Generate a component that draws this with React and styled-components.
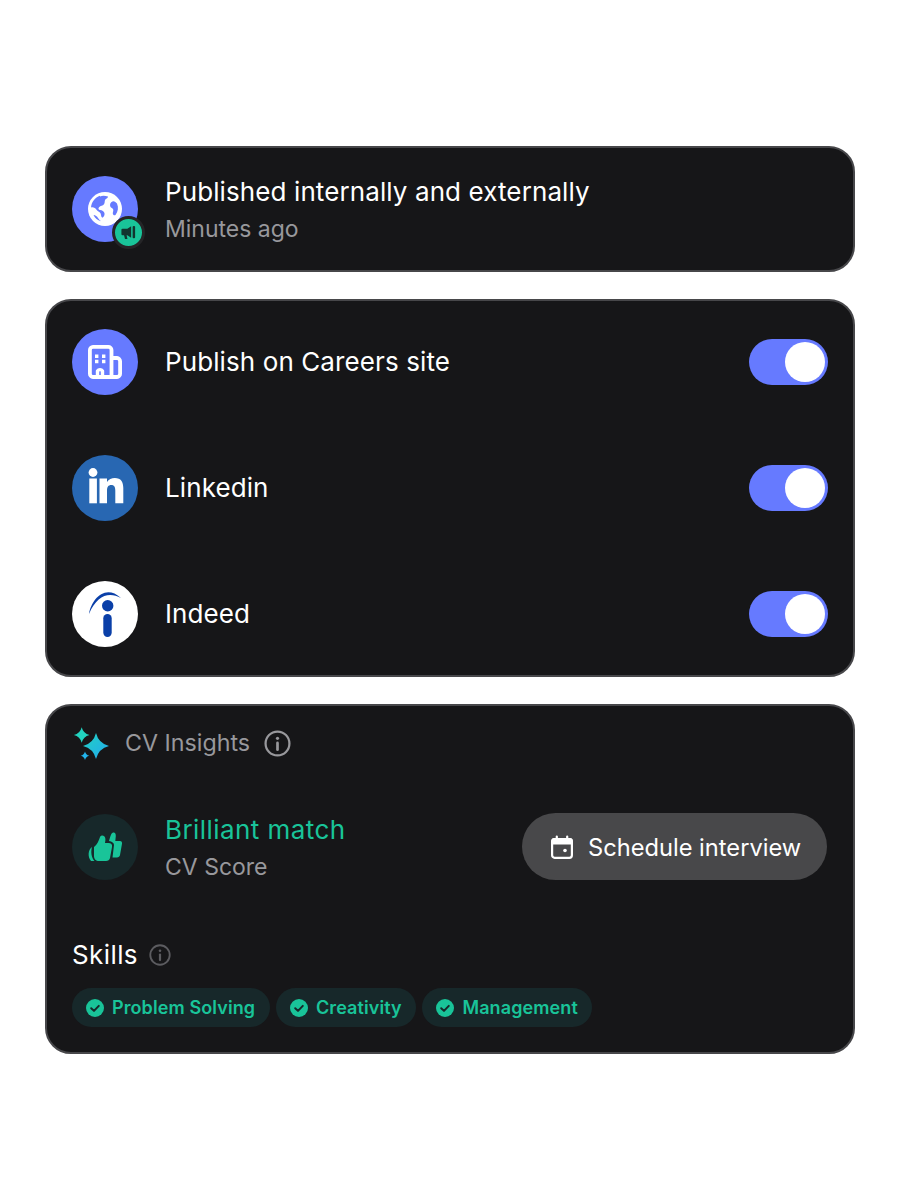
import styled, { createGlobalStyle } from 'styled-components'

const GlobalStyle = createGlobalStyle`
  html, body {
    margin: 0;
    background: #fff;
    font-family: Inter, "Liberation Sans", sans-serif;
  }
`

const green = '#19c499'

const Page = styled.div`
  box-sizing: border-box;
  width: 900px;
  height: 1200px;
  padding: 146px 45px 0;
  display: flex;
  flex-direction: column;
  gap: 27px;
`

const Card = styled.section`
  box-sizing: border-box;
  background: #161618;
  border: 2px solid #47474a;
  border-radius: 26px;
  padding: ${props => props.$padding || '28px 25px'};
  display: flex;
  flex-direction: column;
  gap: ${props => props.$gap || '0'};
`

const Row = styled.div`
  height: 66px;
  display: flex;
  align-items: center;
  gap: 27px;
`

const Avatar = styled.div`
  position: relative;
  flex: none;
  width: 66px;
  height: 66px;
  border-radius: 50%;
  display: flex;
  align-items: center;
  justify-content: center;
  background: ${props => props.$bg};
`

const Badge = styled.div`
  position: absolute;
  right: -6.5px;
  bottom: -6.5px;
  width: 27px;
  height: 27px;
  border: 3px solid #252527;
  border-radius: 50%;
  background: ${green};
  display: flex;
  align-items: center;
  justify-content: center;
`

const TextBlock = styled.div`
  margin-top: 2px;
  display: flex;
  flex-direction: column;
  gap: 7px;
`

const Title = styled.div`
  font-size: 26px;
  line-height: 31px;
  letter-spacing: 0.1px;
  color: #fff;
`

const ChannelName = styled(Title)`
  margin-top: -2px;
`

const MatchTitle = styled(Title)`
  letter-spacing: 0.43px;
  color: ${green};
`

const Sub = styled.div`
  font-size: 23px;
  line-height: 31px;
  color: #98989c;
`

const Toggle = styled.div`
  box-sizing: border-box;
  margin-left: auto;
  width: 79.5px;
  height: 46.5px;
  border-radius: 24px;
  background: #667aff;
  padding: 3.25px;
  display: flex;
  justify-content: flex-end;
  &::after {
    content: '';
    width: 40px;
    height: 40px;
    border-radius: 50%;
    background: #fff;
  }
`

const InsightHead = styled.div`
  display: flex;
  align-items: center;
  height: 36px;
  margin-left: 1px;
  color: #98989c;
  font-size: 23.25px;
`

const HeadLabel = styled.span`
  margin: -2px 14px 0;
`

const MatchRow = styled.div`
  height: 66px;
  margin-top: 53px;
  display: flex;
  align-items: center;
  justify-content: space-between;
`

const ScheduleButton = styled.button`
  box-sizing: border-box;
  width: 305.5px;
  height: 67px;
  margin-top: -1px;
  margin-right: 1px;
  border: 0;
  border-radius: 34px;
  background: #48484a;
  color: #fff;
  font: 400 23.66px Inter, "Liberation Sans", sans-serif;
  display: flex;
  align-items: center;
  gap: 13px;
  padding: 0 0 0 27.5px;
`

const ButtonLabel = styled.span`
  margin-top: 2px;
`

const SkillsHead = styled.div`
  margin-top: 59px;
  display: flex;
  align-items: center;
  gap: 11px;
  color: #fff;
  font-size: 26px;
  line-height: 32px;
  letter-spacing: 0.4px;
`

const Chips = styled.div`
  display: flex;
  gap: 6.2px;
  margin-top: 17px;
`

const Chip = styled.div`
  height: 39px;
  padding: 0 14.5px 0 14px;
  border-radius: 20px;
  background: #17282a;
  color: ${green};
  font-size: 18px;
  font-weight: 600;
  letter-spacing: 0.1px;
  display: flex;
  align-items: center;
  gap: 8px;
`

const Info = ({ size, color }) => (
  <svg width={size} height={size} viewBox="0 0 24 24" fill="none" stroke={color} strokeWidth="2" strokeLinecap="round">
    <circle cx="12" cy="12" r="10.6" />
    <path d="M12 11.5v6" strokeWidth="2.4" />
    <circle cx="12" cy="7.4" r="1.4" fill={color} stroke="none" />
  </svg>
)

const Check = () => (
  <svg width="18" height="18" viewBox="0 0 18 18">
    <circle cx="9" cy="9" r="9" fill={green} />
    <path d="M5.2 9.2 8 11.9l4.8-5" fill="none" stroke="#17282a" strokeWidth="2" strokeLinecap="round" strokeLinejoin="round" />
  </svg>
)

const Globe = () => (
  <svg width="34" height="34" viewBox="0 0 34 34">
    <circle cx="17" cy="17" r="17" fill="#fff" />
    <path d="M12 3.800C7 5.500 3.500 10 3 15.500c2.200-.6 4.500 .4 5.500 2.200 1 1.600 3 1.800 4 3.500 .8 1.500 .2 3 1.800 4.500 1.500-.8 2.500-2.500 2.200-4.500-.3-2-2.500-3-4.500-3.200-1.500-.2-2-1.500-1-2.800 1.500-1.800 3.800-1.200 5-3 1.200-1.800 .2-3.500 1.500-5 .8-1 2.500-1.200 2.500-2.800-2.800-.8-5.500-1.200-8 0Z" fill="#667aff" />
    <path d="M24.500 9.500c-2 .8-3 3-2.200 5 .6 1.500 2.700 1.500 3 3.200 .2 1.500-.8 2.800-.4 4.300 .4 1.200 1.600 1.600 2.600 1 2.600-3.500 3.200-7.500 1.500-11.500-1.200-1.200-2.800-2.600-4.500-2Z" fill="#667aff" />
    <path d="M5.500 23c2 .3 3.500 1.300 4.500 3 .8 1.400 1.800 2.500 3 3.200-3.400-.8-6-3-7.500-6.200Z" fill="#667aff" />
  </svg>
)

const Megaphone = () => (
  <svg width="17" height="17" viewBox="0 0 18 18" fill="#12352f">
    <path d="M1.500 6.200A1.200 1.200 0 0 1 2.700 5h5.100l4-2.600v12.200l-4-2.600H7l.9 4H5.300l-1-4H2.700a1.200 1.200 0 0 1-1.200-1.200z" />
    <rect x="13.400" y="2" width="2.600" height="13" rx="1.100" />
  </svg>
)

const Building = () => (
  <svg width="34" height="34" viewBox="0 0 34 34" fill="none" stroke="#fff" strokeWidth="3.800" strokeLinejoin="round">
    <path d="M23.500 32H5A3.200 3.200 0 0 1 1.900 28.800V5A3.200 3.200 0 0 1 5 1.900h15.300A3.200 3.200 0 0 1 23.500 5V32Z" />
    <path d="M23.500 13H29A3.200 3.200 0 0 1 32.100 16.200V28.800A3.200 3.200 0 0 1 29 32H23.500" />
    <path d="M9.500 32v-6a3 3 0 0 1 5 0v6" strokeWidth="3.400" />
    <path d="M7 11.200h3.400M14 11.200h3.400M7 16.500h3.400M14 16.500h3.400" strokeWidth="3.400" />
  </svg>
)

const Linkedin = () => (
  <svg width="66" height="66" viewBox="0 0 66 66" fill="#fff">
    <circle cx="21" cy="17.500" r="4.400" />
    <rect x="17.300" y="23.500" width="7.600" height="24.800" />
    <path d="M27.500 23.500h7.500v3.400c1.700-2.500 4.600-4 7.800-4 6.300 0 8.500 4 8.500 10.200V48.300h-8V35.500c0-3.300-1-5.500-4-5.500-3.100 0-4.300 2.100-4.300 5.700V48.300h-7.500Z" />
  </svg>
)

const Indeed = () => (
  <svg width="66" height="66" viewBox="0 0 66 66" fill="#0a3fa8">
    <path d="M17 33C19 19 33 2 49 17 37 10.500 25 14 17 33Z" />
    <circle cx="35.700" cy="24.700" r="5.700" />
    <rect x="31.300" y="33" width="8.400" height="23" rx="4.200" />
  </svg>
)

// four point star with concave sides
const star = (cx, cy, r) => {
  const k = r * 0.2
  return `M${cx} ${cy - r}Q${cx + k} ${cy - k} ${cx + r} ${cy}Q${cx + k} ${cy + k} ${cx} ${cy + r}Q${cx - k} ${cy + k} ${cx - r} ${cy}Q${cx - k} ${cy - k} ${cx} ${cy - r}Z`
}

const Sparkles = () => (
  <svg width="38" height="36" viewBox="0 0 38 36">
    <defs>
      <linearGradient id="spark" x1="0" y1="0" x2="1" y2="1">
        <stop offset="0" stopColor="#22d3c0" />
        <stop offset="1" stopColor="#22a8f0" />
      </linearGradient>
    </defs>
    <path d={star(23, 21, 13)} fill="url(#spark)" />
    <path d={star(8.700, 10, 7.800)} fill="#22d3c0" />
    <path d={star(12, 30.700, 4.300)} fill="#22b4ec" />
  </svg>
)

const Thumbs = () => (
  <svg width="36" height="30" viewBox="-1 0 36 30" fill={green}>
    <path d="M21 9C22 6 23 1 25 .5 27 0 28 2 27.800 4L27.300 9H32C33.500 9 34.300 10.300 34 11.800L32 23C31.800 24.500 30.500 25.500 29 25.500H24.500L26 13C26 11 24 9.500 21 9Z" />
    <path d="M6 15C9 13 11 8 12 5 13 3 15 3 16.500 4.500 17.800 6 17.500 8 17 11H20.500C23 11 24.500 12.500 24 15L22 26C21.600 28 20 29 18 29H11C8 29 6 27 6 24Z" />
    <path d="M4 15C0 17.500-.5 25 3 29H6.500C3.500 26 2.500 20 4 15Z" />
  </svg>
)

const Calendar = () => (
  <svg width="26" height="26" viewBox="0 0 26 26" fill="none" stroke="#fff">
    <rect x="3.100" y="5" width="19.800" height="18.800" rx="2.500" strokeWidth="2.200" />
    <path d="M3.200 9.500h19.600V7a2 2 0 0 0-2-2H5.200a2 2 0 0 0-2 2Z" fill="#fff" strokeWidth="2" />
    <path d="M7.800 2.500v3M18.200 2.500v3" strokeWidth="2.200" strokeLinecap="round" />
    <circle cx="16" cy="16.500" r="1.800" fill="#fff" stroke="none" />
  </svg>
)

const channels = [
  { name: 'Publish on Careers site', bg: '#667aff', icon: <Building /> },
  { name: 'Linkedin', bg: '#2867b2', icon: <Linkedin /> },
  { name: 'Indeed', bg: '#fff', icon: <Indeed /> },
]

const skills = ['Problem Solving', 'Creativity', 'Management']

export default function App() {
  return (
    <Page>
      <GlobalStyle />
      <Card>
        <Row>
          <Avatar $bg="#667aff">
            <Globe />
            <Badge><Megaphone /></Badge>
          </Avatar>
          <TextBlock>
            <Title>Published internally and externally</Title>
            <Sub>Minutes ago</Sub>
          </TextBlock>
        </Row>
      </Card>

      <Card $gap="60px">
        {channels.map(c => (
          <Row key={c.name}>
            <Avatar $bg={c.bg}>{c.icon}</Avatar>
            <ChannelName>{c.name}</ChannelName>
            <Toggle />
          </Row>
        ))}
      </Card>

      <Card $padding="19px 25px 25px">
        <InsightHead>
          <Sparkles />
          <HeadLabel>CV Insights</HeadLabel>
          <Info size={27} color="#98989c" />
        </InsightHead>
        <MatchRow>
          <Row>
            <Avatar $bg="#17282a"><Thumbs /></Avatar>
            <TextBlock>
              <MatchTitle>Brilliant match</MatchTitle>
              <Sub>CV Score</Sub>
            </TextBlock>
          </Row>
          <ScheduleButton><Calendar /><ButtonLabel>Schedule interview</ButtonLabel></ScheduleButton>
        </MatchRow>
        <SkillsHead>
          Skills
          <Info size={22} color="#5c5c60" />
        </SkillsHead>
        <Chips>
          {skills.map(s => (
            <Chip key={s}><Check />{s}</Chip>
          ))}
        </Chips>
      </Card>
    </Page>
  )
}
